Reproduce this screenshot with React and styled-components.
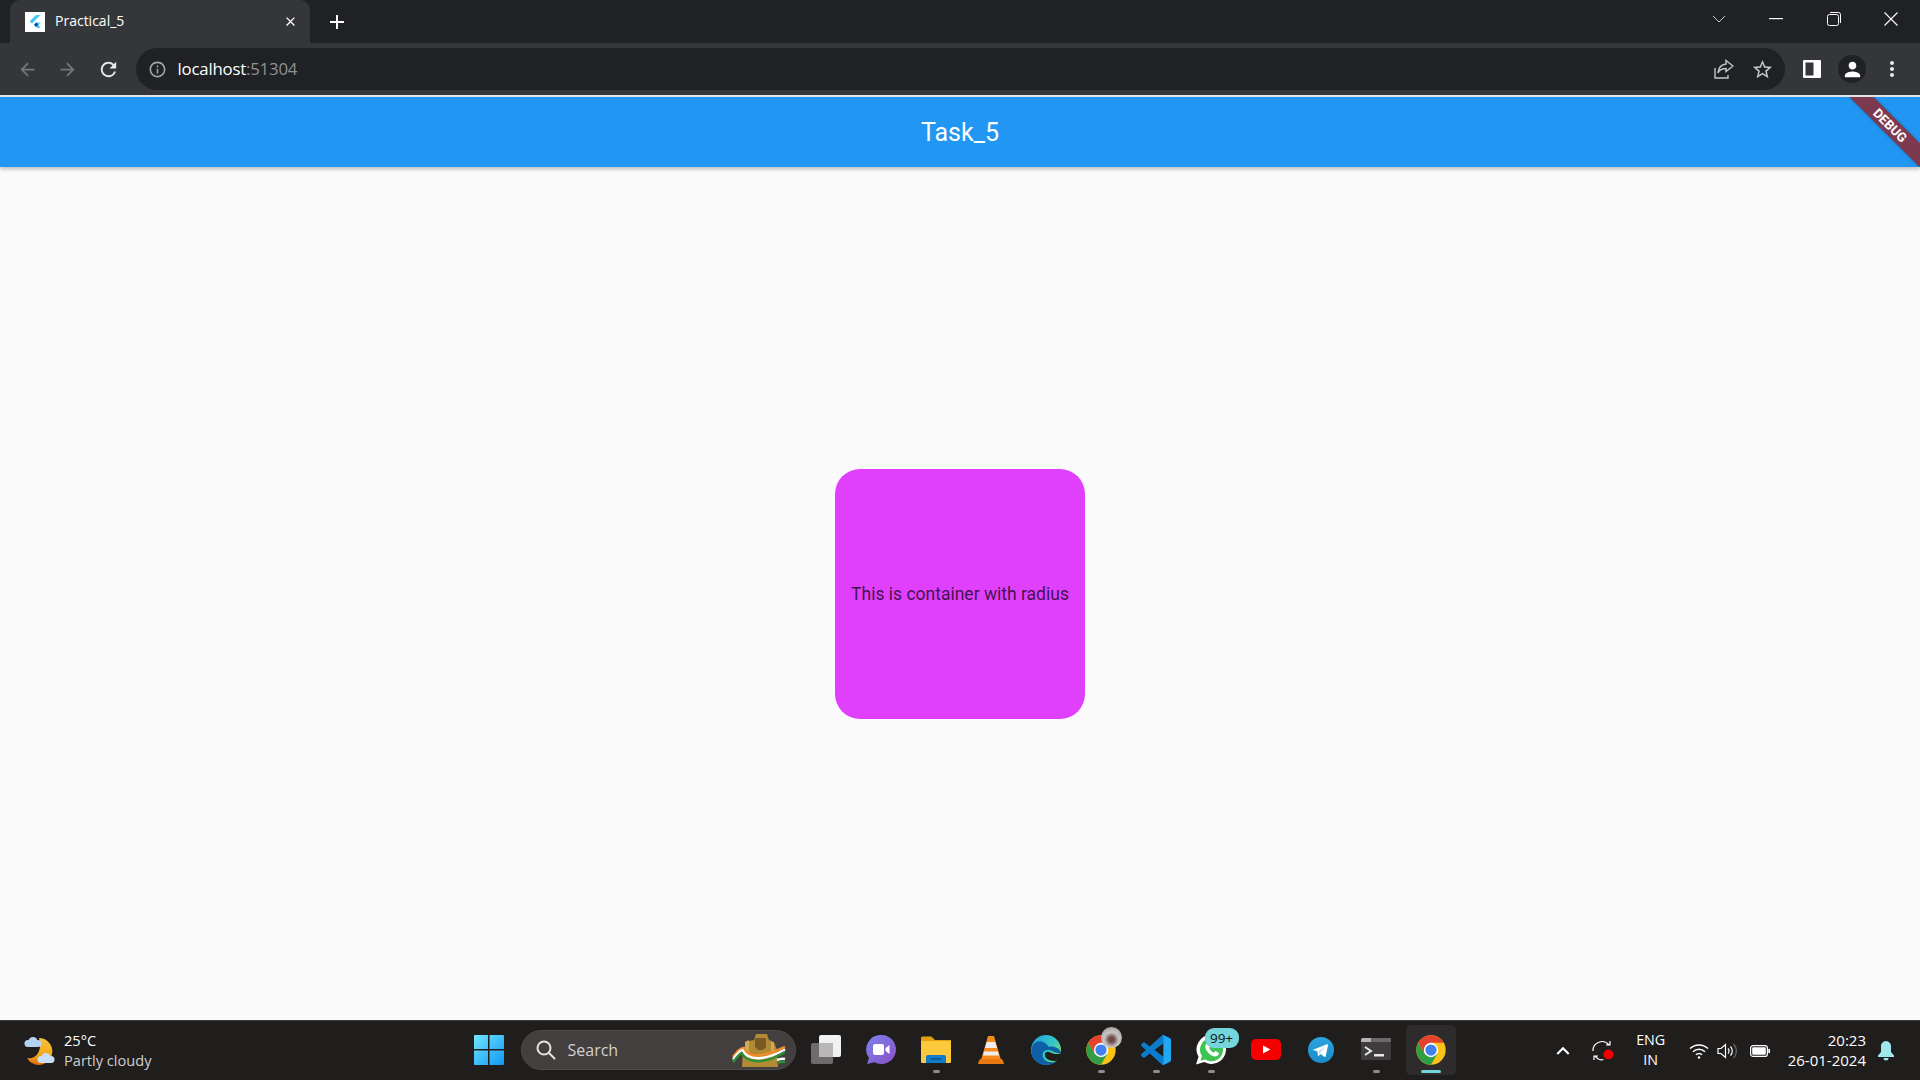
import React from 'react';
import styled, { createGlobalStyle } from 'styled-components';
import { MdArrowBack, MdArrowForward, MdRefresh, MdInfoOutline, MdStarBorder, MdPerson, MdMoreVert, MdClose, MdAdd, MdKeyboardArrowUp } from 'react-icons/md';

const GlobalStyle = createGlobalStyle`
  html, body { margin: 0; padding: 0; }
  body { background: #fafafa; font-family: 'Roboto', sans-serif; overflow: hidden; }
`;

const Page = styled.div`
  width: 1920px;
  height: 1080px;
  display: flex;
  flex-direction: column;
`;

/* browser chrome */
const TabStrip = styled.div`
  height: 43px;
  flex: none;
  background: #202124;
  display: flex;
  align-items: stretch;
  padding-left: 10px;
  color: #fff;
`;

const Tab = styled.div`
  width: 300px;
  background: #35363a;
  border-radius: 10px 10px 0 0;
  display: flex;
  align-items: center;
  padding: 0 12px 0 15px;
  box-sizing: border-box;
  font-family: 'Open Sans', sans-serif;
  font-size: 14px;
  gap: 10px;
`;

const TabTitle = styled.span`
  flex: 1;
  padding-bottom: 2px;
`;

const NewTab = styled.div`
  width: 32px;
  margin-left: 11px;
  display: flex;
  align-items: center;
  justify-content: center;
`;

const WindowControls = styled.div`
  margin-left: auto;
  display: flex;
  align-items: center;
  padding: 0 0 6px 0;
`;

const WindowButton = styled.div`
  width: 57.5px;
  display: flex;
  justify-content: center;
`;

const Toolbar = styled.div`
  height: 52px;
  flex: none;
  background: #35363a;
  display: flex;
  align-items: center;
  padding: 0 8px 0 7px;
  border-bottom: 2px solid #e8e8e8;
`;

const NavButton = styled.div`
  width: 40.5px;
  display: flex;
  justify-content: center;
  color: ${p => (p.$dim ? '#75777b' : '#e8eaed')};
`;

const Omnibox = styled.div`
  flex: 1;
  height: 42px;
  margin: 0 7px 0 7px;
  background: #202124;
  border-radius: 21px;
  display: flex;
  align-items: center;
  padding: 0 3px 0 12px;
  font-family: 'Open Sans', sans-serif;
  font-size: 16.8px;
  color: #fff;
`;

const Url = styled.span`
  margin-left: 11px;
  flex: 1;
  letter-spacing: -0.2px;
  padding-bottom: 1px;
`;

const UrlPort = styled.span`
  color: #8f9194;
`;

const OmniIcon = styled.div`
  width: 39px;
  display: flex;
  justify-content: center;
  color: #c4c6c9;
`;

const ToolButton = styled.div`
  width: 40px;
  display: flex;
  justify-content: center;
  color: #e8eaed;
`;

const Avatar = styled.div`
  width: 28px;
  height: 28px;
  border-radius: 50%;
  background: #202124;
  display: flex;
  align-items: center;
  justify-content: center;
  color: #fff;
`;

/* flutter page */
const AppBar = styled.header`
  height: 70px;
  flex: none;
  background: #2196f3;
  color: #fff;
  font-size: 25px;
  display: flex;
  align-items: center;
  justify-content: center;
  position: relative;
  overflow: hidden;
  box-shadow: 0 2px 4px rgba(0, 0, 0, 0.25);
  z-index: 1;
`;

const DebugRibbon = styled.div`
  position: absolute;
  top: 20px;
  right: -30px;
  width: 120px;
  height: 17px;
  background: #7c3950;
  color: #fff;
  font-size: 13px;
  font-weight: 700;
  line-height: 17px;
  text-align: center;
  transform: rotate(45deg);
  box-shadow: 0 0 3px rgba(0, 0, 0, 0.3);
`;

const Body = styled.main`
  flex: 1;
  background: #fafafa;
  display: flex;
  align-items: center;
  justify-content: center;
  padding-top: 1px;
`;

const RadiusBox = styled.div`
  width: 250px;
  height: 250px;
  padding-bottom: 1px;
  box-sizing: border-box;
  background: #e040fb;
  border-radius: 25px;
  display: flex;
  align-items: center;
  justify-content: center;
  font-size: 17.5px;
  color: rgba(0, 0, 0, 0.72);
`;

/* windows taskbar */
const Taskbar = styled.footer`
  height: 59px;
  flex: none;
  background: #201d1d;
  border-top: 1px solid #3b3939;
  display: grid;
  grid-template-columns: 461.5px auto 1fr;
  align-items: center;
  color: #fff;
  font-family: 'Open Sans', sans-serif;
`;

const Weather = styled.div`
  display: flex;
  align-items: center;
  padding-left: 24px;
  gap: 9px;
`;

const WeatherText = styled.div`
  font-size: 14.6px;
  line-height: 20px;
  padding-bottom: 2px;
`;

const Muted = styled.div`
  color: #d0cece;
`;

const Center = styled.div`
  display: flex;
  align-items: center;
  margin-bottom: 1px;
`;

const Slot = styled.div`
  width: 55px;
  height: 50px;
  display: flex;
  align-items: center;
  justify-content: center;
  position: relative;
  box-sizing: border-box;
  &::before {
    content: '';
    display: ${p => (p.$active ? 'block' : 'none')};
    position: absolute;
    left: 2.5px;
    top: 0;
    width: 50px;
    height: 50px;
    border-radius: 5px;
    background: #2d2b2b;
  }
  &::after {
    content: '';
    display: ${p => (p.$active || p.$open ? 'block' : 'none')};
    position: absolute;
    left: ${p => (p.$active ? '17.5px' : '24px')};
    bottom: 2px;
    width: ${p => (p.$active ? '20px' : '7px')};
    height: 3.5px;
    border-radius: 2px;
    background: ${p => (p.$active ? '#74d6dc' : '#8e8c8c')};
  }
  svg { position: relative; }
`;

const SearchBox = styled.div`
  width: 275px;
  height: 40px;
  margin: 0 3px 0 4px;
  box-sizing: border-box;
  background: #423f3e;
  border: 1px solid #4d4a49;
  border-radius: 20px;
  display: flex;
  align-items: center;
  padding-left: 14px;
  gap: 12px;
  font-size: 16px;
  color: #d3d1d0;
  position: relative;
`;

const Emblem = styled.svg`
  position: absolute;
  right: 9px;
  top: 3px;
`;

const Badge = styled.div`
  position: absolute;
  left: 21px;
  top: 3px;
  width: 34px;
  height: 20px;
  border-radius: 9px;
  background: #74d6dc;
  color: #111;
  font-size: 13.5px;
  line-height: 20px;
  text-align: center;
`;

const Tray = styled.div`
  display: flex;
  align-items: center;
  justify-content: flex-end;
  height: 100%;
  padding-right: 25px;
`;

const TrayIcon = styled.div`
  width: ${p => p.$w || 30}px;
  margin-left: ${p => p.$gap || 0}px;
  display: flex;
  justify-content: center;
  color: #fff;
`;

const Lang = styled.div`
  width: 40px;
  margin: 0 16px 0 13px;
  text-align: center;
  font-size: 14.3px;
  line-height: 20px;
  padding-bottom: 2px;
`;

const Clock = styled.div`
  margin-left: 16px;
  text-align: right;
  font-size: 15px;
  line-height: 20px;
  padding-bottom: 2px;
`;

/* drawings */
const FlutterFavicon = () => (
  <svg width="20" height="20" viewBox="0 0 20 20">
    <rect width="20" height="20" fill="#fff" />
    <path d="M11 3h4.5L7 11.5l-2.3-2.2z" fill="#47c5fb" />
    <path d="M11 10.5h4.5L11.2 15 9 12.7z" fill="#47c5fb" />
    <path d="M9 12.7l2.2-2.2 2.2 2.2-2.2 2.3z" fill="#00569e" />
    <path d="M11.2 15l2.2-2.3 2.2 3.3H12.2z" fill="#00b5f8" opacity=".7" />
  </svg>
);

const WinChevron = () => (
  <svg width="14" height="8" viewBox="0 0 14 8" fill="none" stroke="#c8c9cb" strokeWidth="1"><path d="M1 1l6 6 6-6" /></svg>
);
const WinMinimize = () => (
  <svg width="14" height="2" viewBox="0 0 14 2"><rect width="14" height="1.2" fill="#fff" /></svg>
);
const WinRestore = () => (
  <svg width="14" height="14" viewBox="0 0 14 14" fill="none" stroke="#fff" strokeWidth="1"><rect x=".5" y="2.5" width="11" height="11" rx="2" /><path d="M3 .5h8.5a2 2 0 0 1 2 2V11" /></svg>
);
const WinClose = () => (
  <svg width="14" height="14" viewBox="0 0 14 14" stroke="#fff" strokeWidth="1.1"><path d="M.5.5l13 13M13.5.5l-13 13" /></svg>
);

const ShareIcon = () => (
  <svg width="20" height="20" viewBox="0 0 20 20" fill="none" stroke="#c4c6c9" strokeWidth="1.4">
    <path d="M1 9v10h13v-3" />
    <path d="M12 1.5l7 5.5-7 5.5V9.5c-4 0-6.500 1.300-8 4.500 .5-5 3-8.500 8-9z" />
  </svg>
);

const SidePanelIcon = () => (
  <svg width="18" height="18" viewBox="0 0 18 18">
    <rect width="18" height="18" rx="1" fill="#fff" />
    <rect x="2.5" y="2.5" width="8" height="13" fill="#35363a" />
  </svg>
);

const Cloud = ({ x, y, fill }) => (
  <g transform={`translate(${x} ${y})`} fill={fill}>
    <circle cx="9" cy="4.5" r="4.5" />
    <circle cx="4" cy="6.5" r="3.5" />
    <circle cx="14" cy="6.5" r="3.5" />
    <rect x="4" y="6" width="10" height="4" />
  </g>
);

const WeatherIcon = () => (
  <svg width="31" height="30" viewBox="0 0 31 30">
    <defs>
      <linearGradient id="moonGrad" x1="0" y1="0" x2="0" y2="1">
        <stop offset="0" stopColor="#f8c33a" />
        <stop offset=".6" stopColor="#f2a91f" />
        <stop offset="1" stopColor="#e2690c" />
      </linearGradient>
    </defs>
    <path d="M15 2A13.5 13.5 0 1 1 3 22c8 2 16-6 12-20z" fill="url(#moonGrad)" />
    <Cloud x={0} y={1} fill="#b4d3f4" />
    <Cloud x={13} y={17} fill="#c8dff8" />
  </svg>
);

const WindowsLogo = () => (
  <svg width="30" height="30" viewBox="0 0 30 30">
    <defs>
      <linearGradient id="winGrad" x1="0" y1="0" x2="1" y2="1">
        <stop offset="0" stopColor="#72e6ff" />
        <stop offset="1" stopColor="#0f97f3" />
      </linearGradient>
    </defs>
    <path d="M0 1a1 1 0 0 1 1-1h13v14H0zM15.5 0H29a1 1 0 0 1 1 1v13H15.5zM0 15.5h14V30H1a1 1 0 0 1-1-1zM15.5 15.5H30V29a1 1 0 0 1-1 1H15.5z" fill="url(#winGrad)" />
  </svg>
);

const SearchGlyph = () => (
  <svg width="20" height="20" viewBox="0 0 20 20" fill="none" stroke="#e6e4e3" strokeWidth="2">
    <circle cx="8" cy="8" r="6.5" /><path d="M13 13l5.5 5.5" strokeLinecap="round" />
  </svg>
);

const LionEmblem = () => (
  <Emblem width="54" height="33" viewBox="0 0 54 33">
    <path d="M10 33l1-18 6-8 5-1 2-6h11l2 6 5 2 3 8 1 17z" fill="#b08a35" />
    <path d="M23 4h11v9l-3 3h-5l-3-3z" fill="#7a5a22" />
    <path d="M13 8l4-2v16h-4zM39 7l3 2v14h-3z" fill="#d2aa55" />
    <g fill="none" strokeWidth="2.5">
      <path d="M1 23C5 18 9 13 12 14c4 11 20 9 41-1" stroke="#f08a2b" />
      <path d="M1 25.5C5 20.5 8 16 10.5 16c5 11 22 11 42.5-.5" stroke="#fff" />
      <path d="M1 28C5 23 8 19 9.5 19c6 11 24 11 43.5-1" stroke="#2e8f36" />
      <path d="M45 26c3-1 5-2 8-1" stroke="#fff" />
      <path d="M45 29c3-1 5-2 8-1" stroke="#2e8f36" />
    </g>
  </Emblem>
);

const TaskViewIcon = () => (
  <svg width="30" height="30" viewBox="0 0 30 30">
    <rect y="8" width="22" height="21" rx="2" fill="#6d6b6b" />
    <rect x="8" y="0" width="22" height="22" rx="2" fill="#f1f1f1" />
    <rect x="8" y="8" width="14" height="14" fill="#b8b6b6" />
  </svg>
);

const MeetIcon = () => (
  <svg width="30" height="30" viewBox="0 0 30 30">
    <defs>
      <linearGradient id="meetGrad" x1="0" y1="0" x2="1" y2="1">
        <stop offset="0" stopColor="#7b83eb" />
        <stop offset="1" stopColor="#8a4fc8" />
      </linearGradient>
    </defs>
    <path d="M15.5 0a14.5 14.5 0 1 1-7 27.2L1 29l2-6A14.5 14.5 0 0 1 15.5 0z" fill="url(#meetGrad)" />
    <rect x="7" y="9" width="11" height="11" rx="2" fill="#fff" />
    <path d="M19.5 13l4-3v9l-4-3z" fill="#fff" />
  </svg>
);

const FolderIcon = () => (
  <svg width="30" height="30" viewBox="0 0 30 30">
    <path d="M0 3a1.5 1.5 0 0 1 1.5-1.5h9L14 5h16v5H0z" fill="#e3a20d" />
    <rect y="6" width="30" height="22" rx="1" fill="#fcc93c" />
    <path d="M5 28v-6a2 2 0 0 1 2-2h16a2 2 0 0 1 2 2v6z" fill="#0f7cc9" />
    <rect x="10" y="23" width="10" height="1.5" fill="#0a4f85" />
  </svg>
);

const VlcIcon = () => (
  <svg width="26" height="30" viewBox="0 0 26 30">
    <path d="M10 1h6l7 24H3z" fill="#f58a1f" />
    <path d="M8.8 7h8.4l1.8 6H7zM6 16.5h14l1 4H5z" fill="#eee" />
    <path d="M2 24h22l2 4a1 1 0 0 1-1 1H1a1 1 0 0 1-1-1z" fill="#e8790e" />
  </svg>
);

const EdgeIcon = () => (
  <svg width="30" height="30" viewBox="0 0 30 30">
    <defs>
      <linearGradient id="edgeGrad" x1="0" y1="0" x2="1" y2=".7">
        <stop offset="0" stopColor="#1b9de2" />
        <stop offset=".6" stopColor="#33c6c8" />
        <stop offset="1" stopColor="#77dc6a" />
      </linearGradient>
    </defs>
    <circle cx="15" cy="15" r="15" fill="url(#edgeGrad)" />
    <path d="M1 12c-3 11 6 18 14 18 5 0 9-2 11-4-4 2-10 2-13-2-3-4-1-10 5-9 4 1 7 4 12 3 0-3-6-8-12-6C11 3 3 6 1 12z" fill="#0f5fa8" />
    <path d="M30 18c-3 2-8 1-12-1-4-1-5 3-3 6 3 3 9 4 12 2 2-2 3-5 3-7z" fill="#201d1d" />
  </svg>
);

const ChromeIcon = () => (
  <svg width="30" height="30" viewBox="0 0 48 48">
    <circle cx="24" cy="24" r="23.5" fill="#fbc116" />
    <path d="M3.65 12.25a23.5 23.5 0 0 0 20.35 35.25L34.2 29.9H13.8z" fill="#2f9e44" />
    <path d="M3.65 12.25a23.5 23.5 0 0 1 40.7 0H24L13.8 29.9z" fill="#e5412f" />
    <circle cx="24" cy="24" r="11.5" fill="#fff" />
    <circle cx="24" cy="24" r="9" fill="#3f82ee" />
  </svg>
);

const ProfileBlob = styled.div`
  position: absolute;
  left: 27px;
  top: 2px;
  width: 21px;
  height: 21px;
  border-radius: 50%;
  background: radial-gradient(circle at 50% 60%, #6d4a48 0 15%, #c9c7c6 45%, #8d8b8a 100%);
`;

const VsCodeIcon = () => (
  <svg width="30" height="30" viewBox="0 0 24 24">
    <path d="M23.15 2.587L18.21.21a1.494 1.494 0 0 0-1.705.29l-9.46 8.63-4.12-3.128a.999.999 0 0 0-1.276.057L.327 7.261A1 1 0 0 0 .326 8.74L3.899 12 .326 15.26a1 1 0 0 0 .001 1.479L1.65 17.94a.999.999 0 0 0 1.276.057l4.12-3.128 9.46 8.63a1.492 1.492 0 0 0 1.704.29l4.942-2.377A1.5 1.5 0 0 0 24 20.06V3.939a1.5 1.5 0 0 0-.85-1.352zm-5.146 14.861L10.826 12l7.178-5.448v10.896z" fill="#0a7ccb" />
    <path d="M17 .2a1.5 1.5 0 0 1 1.21.01l4.94 2.377A1.5 1.5 0 0 1 24 3.939V20.06a1.5 1.5 0 0 1-.85 1.35l-4.94 2.38a1.5 1.5 0 0 1-1.21 0 1.2 1.2 0 0 0 1-1.2V1.4A1.2 1.2 0 0 0 17 .2z" fill="#22a7f2" />
  </svg>
);

const WhatsAppIcon = () => (
  <svg width="30" height="30" viewBox="0 0 30 30">
    <path d="M15.5 0a14.5 14.5 0 1 1-7.2 27.1L0 29.5l2.5-7.8A14.5 14.5 0 0 1 15.5 0z" fill="#fff" />
    <path d="M15.5 3a11.6 11.6 0 1 1-6.2 21.4L4.5 25.8 6 21A11.6 11.6 0 0 1 15.5 3z" fill="#3fc352" />
    <path d="M11 8.5c-2 1-2.5 3.5-.5 7 2 3 5 5.5 8 6 2.5 0 4.5-1.5 4.5-3.5l-3.5-2-1.5 1.5c-2-.5-4-2.5-4.8-4.8l1.3-1.5-1.5-3.3z" fill="#fff" />
  </svg>
);

const YouTubeIcon = () => (
  <svg width="30" height="22" viewBox="0 0 30 22">
    <rect width="30" height="21" rx="5" fill="#f50000" />
    <path d="M12 6.5l7.5 4-7.5 4z" fill="#fff" />
  </svg>
);

const TelegramIcon = () => (
  <svg width="26" height="26" viewBox="0 0 26 26">
    <defs>
      <linearGradient id="tgGrad" x1="0" y1="0" x2="0" y2="1">
        <stop offset="0" stopColor="#2aa5e0" />
        <stop offset="1" stopColor="#1b8bc9" />
      </linearGradient>
    </defs>
    <circle cx="13" cy="13" r="13" fill="url(#tgGrad)" />
    <path d="M5 12.8l14-5.6c.7-.2 1.2.2 1 1l-2.3 11c-.2.8-.8 1-1.4.6l-3.7-2.8-1.9 1.8c-.4.3-.7.2-.8-.3l-.6-4.2-4.2-1.3z" fill="#fff" />
    <path d="M10.3 14.3l7-4.8-5 6-.6 2.6z" fill="#b9dcef" />
  </svg>
);

const TerminalIcon = () => (
  <svg width="30" height="24" viewBox="0 0 30 24">
    <rect width="30" height="22" rx="2" fill="#3e3c3c" />
    <path d="M0 2a2 2 0 0 1 2-2h8v4H0z" fill="#b5b3b3" />
    <rect x="10" width="20" height="4" rx="1" fill="#6b6969" />
    <path d="M4 9l6 4-6 4" fill="none" stroke="#e8e8e8" strokeWidth="2" />
    <rect x="13" y="16" width="10" height="2.5" fill="#e8e8e8" />
  </svg>
);

const SyncIcon = () => (
  <svg width="22" height="22" viewBox="0 0 22 22" fill="none" stroke="#fff" strokeWidth="1.2">
    <path d="M1 11a9 9 0 0 1 16-6M14 5h4V1" />
    <path d="M3 16l2.5 2.5a7 7 0 0 0 6 1M2 20v-4h4" />
    <circle cx="16.5" cy="14.5" r="5" fill="#f00000" stroke="none" />
  </svg>
);

const WifiIcon = () => (
  <svg width="20" height="16" viewBox="0 0 20 16" fill="none" stroke="#fff" strokeWidth="1.5">
    <path d="M1 5.5a13 13 0 0 1 18 0M4 8.8a8.5 8.5 0 0 1 12 0M7 11.8a4 4 0 0 1 6 0" />
    <circle cx="10" cy="14.5" r="1.2" fill="#fff" stroke="none" />
  </svg>
);

const VolumeIcon = () => (
  <svg width="20" height="16" viewBox="0 0 20 16" fill="none" stroke="#fff" strokeWidth="1.2">
    <path d="M1 5.5h3L8.5 1.5v13L4 10.5H1z" />
    <path d="M11 5.5a3.5 3.5 0 0 1 0 5M13.5 3.5a6.5 6.5 0 0 1 0 9" />
    <path d="M16.5 1a10 10 0 0 1 0 14" stroke="#6f6d6d" />
  </svg>
);

const BatteryIcon = () => (
  <svg width="20" height="12" viewBox="0 0 20 12">
    <rect x=".6" y=".6" width="16.8" height="10.8" rx="2.5" fill="none" stroke="#fff" strokeWidth="1.2" />
    <rect x="2.2" y="2.2" width="13.6" height="7.6" rx="1.2" fill="#fff" />
    <rect x="18.3" y="3.8" width="1.7" height="4.4" rx=".8" fill="#fff" />
  </svg>
);

const BellIcon = () => (
  <svg width="16" height="20" viewBox="0 0 16 20">
    <path d="M8 0a5 5 0 0 1 5 5.5V11l3 3.5V16H0v-1.5L3 11V5.5A5 5 0 0 1 8 0z" fill="#9ee9ec" />
    <path d="M5.5 17h5a2.5 2.5 0 0 1-5 0z" fill="#9ee9ec" />
  </svg>
);

const App = () => {
  return (
    <Page>
      <GlobalStyle />
      <TabStrip>
        <Tab>
          <FlutterFavicon />
          <TabTitle>Practical_5</TabTitle>
          <MdClose size={15} />
        </Tab>
        <NewTab><MdAdd size={24} /></NewTab>
        <WindowControls>
          <WindowButton><WinChevron /></WindowButton>
          <WindowButton><WinMinimize /></WindowButton>
          <WindowButton><WinRestore /></WindowButton>
          <WindowButton><WinClose /></WindowButton>
        </WindowControls>
      </TabStrip>

      <Toolbar>
        <NavButton $dim><MdArrowBack size={21} /></NavButton>
        <NavButton $dim><MdArrowForward size={21} /></NavButton>
        <NavButton><MdRefresh size={23} /></NavButton>
        <Omnibox>
          <MdInfoOutline size={19} color="#a5a7aa" />
          <Url>localhost<UrlPort>:51304</UrlPort></Url>
          <OmniIcon><ShareIcon /></OmniIcon>
          <OmniIcon><MdStarBorder size={23} /></OmniIcon>
        </Omnibox>
        <ToolButton><SidePanelIcon /></ToolButton>
        <ToolButton><Avatar><MdPerson size={23} /></Avatar></ToolButton>
        <ToolButton><MdMoreVert size={24} /></ToolButton>
      </Toolbar>

      <AppBar>
        Task_5
        <DebugRibbon>DEBUG</DebugRibbon>
      </AppBar>

      <Body>
        <RadiusBox>This is container with radius</RadiusBox>
      </Body>

      <Taskbar>
        <Weather>
          <WeatherIcon />
          <WeatherText>
            25°C
            <Muted>Partly cloudy</Muted>
          </WeatherText>
        </Weather>
        <Center>
          <Slot><WindowsLogo /></Slot>
          <SearchBox>
            <SearchGlyph />
            Search
            <LionEmblem />
          </SearchBox>
          <Slot><TaskViewIcon /></Slot>
          <Slot><MeetIcon /></Slot>
          <Slot $open><FolderIcon /></Slot>
          <Slot><VlcIcon /></Slot>
          <Slot><EdgeIcon /></Slot>
          <Slot $open><ChromeIcon /><ProfileBlob /></Slot>
          <Slot $open><VsCodeIcon /></Slot>
          <Slot $open><WhatsAppIcon /><Badge>99+</Badge></Slot>
          <Slot><YouTubeIcon /></Slot>
          <Slot><TelegramIcon /></Slot>
          <Slot $open><TerminalIcon /></Slot>
          <Slot $active><ChromeIcon /></Slot>
        </Center>
        <Tray>
          <TrayIcon><MdKeyboardArrowUp size={26} /></TrayIcon>
          <TrayIcon $gap={10}><SyncIcon /></TrayIcon>
          <Lang>ENG<br />IN</Lang>
          <TrayIcon $w={24}><WifiIcon /></TrayIcon>
          <TrayIcon $w={24} $gap={4}><VolumeIcon /></TrayIcon>
          <TrayIcon $w={24} $gap={9}><BatteryIcon /></TrayIcon>
          <Clock>20:23<br />26-01-2024</Clock>
          <TrayIcon $w={18} $gap={11}><BellIcon /></TrayIcon>
        </Tray>
      </Taskbar>
    </Page>
  );
};

export default App;
